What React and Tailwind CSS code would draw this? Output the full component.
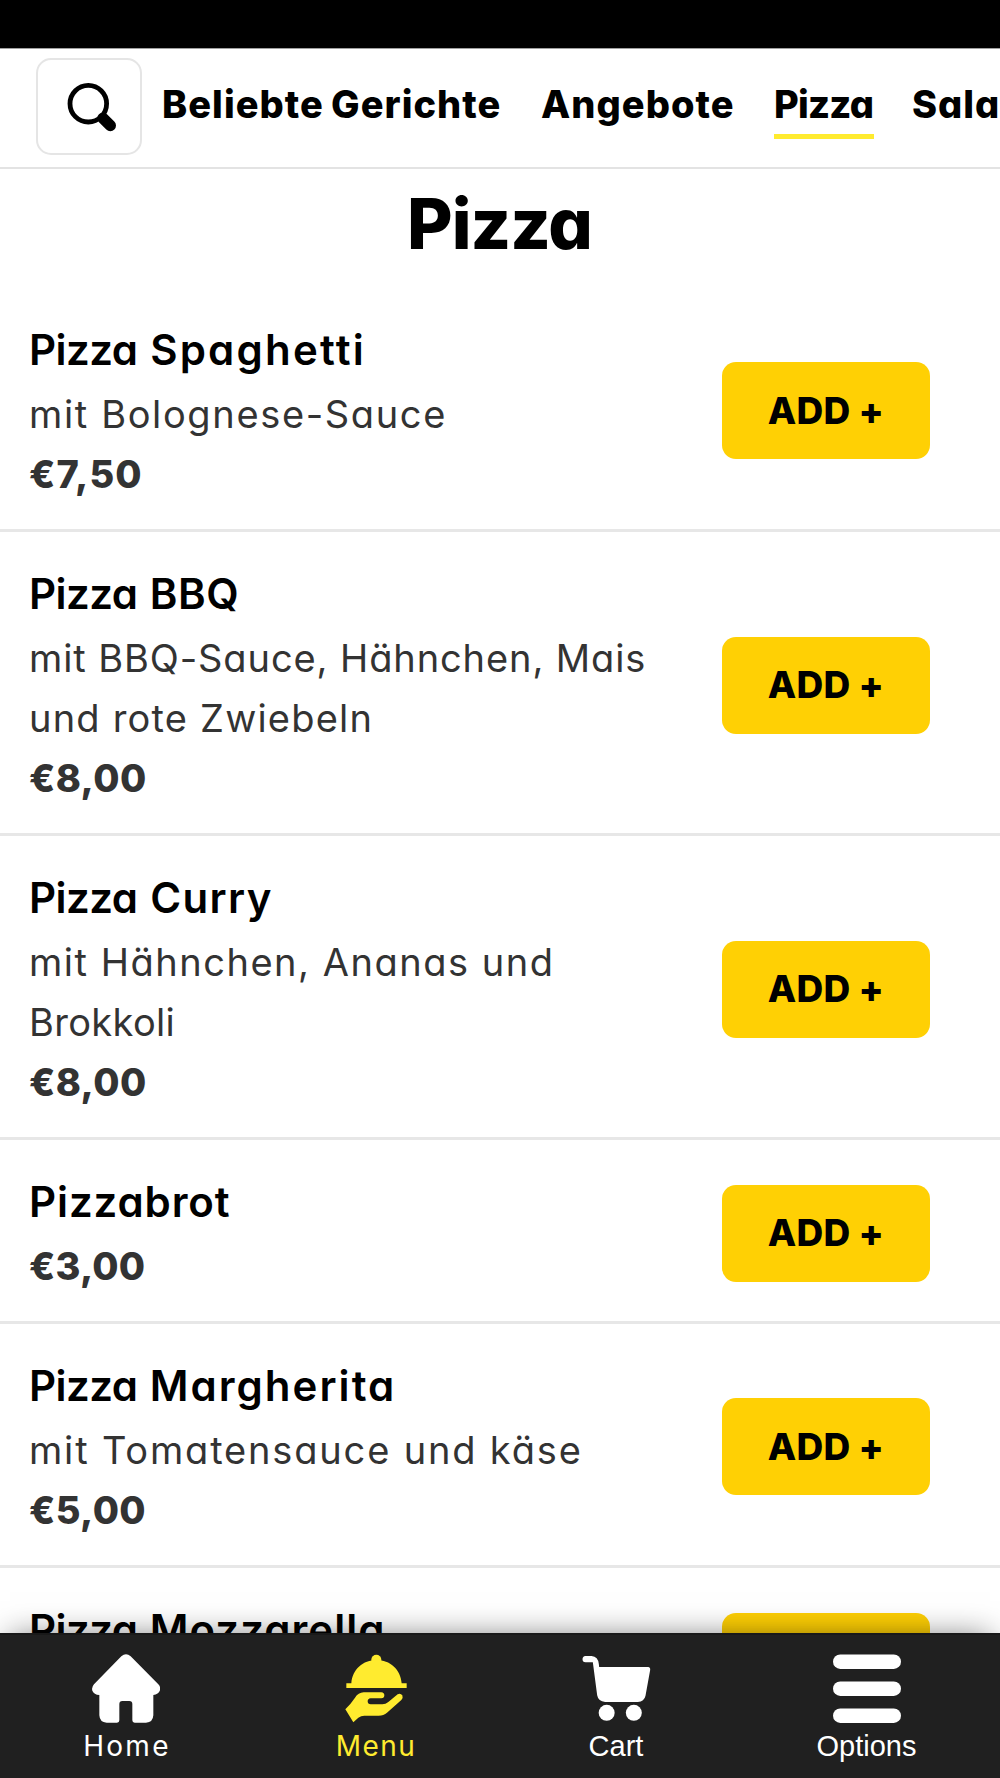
import React from "react";

const categories = [
  { label: "Beliebte Gerichte", cls: "w-[379px] tracking-[1.02px] [word-spacing:-2px]" },
  { label: "Angebote", cls: "w-[233px] tracking-[1.05px]" },
  { label: "Pizza", cls: "w-[100px] mr-[38px] tracking-[-0.8px]", active: true },
  { label: "Salate", cls: "tracking-[1px]" },
];

const dishes = [
  {
    name: "Spaghetti",
    nameCls: "tracking-[2.2px] ml-[2.5px]",
    lines: [["mit Bolognese-Sauce", "tracking-[1.64px]"]],
    price: "€7,50",
    priceCls: "tracking-[1.1px]",
    row: "h-[244px]",
    buttonCls: "mt-[4px]",
  },
  {
    name: "BBQ",
    nameCls: "tracking-[0.6px] ml-[2px]",
    lines: [
      ["mit BBQ-Sauce, Hähnchen, Mais", "tracking-[0.9px]"],
      ["und rote Zwiebeln", "tracking-[1.2px]"],
    ],
    price: "€8,00",
    priceCls: "tracking-[0.4px]",
    row: "h-[304px]",
    buttonCls: "mt-[5px]",
  },
  {
    name: "Curry",
    nameCls: "tracking-[1.4px] ml-[2.5px]",
    lines: [
      ["mit Hähnchen, Ananas und", "tracking-[1.52px]"],
      ["Brokkoli", "tracking-[0.35px]"],
    ],
    price: "€8,00",
    priceCls: "tracking-[0.4px]",
    row: "h-[304px]",
    buttonCls: "mt-[5px]",
  },
  {
    fullName: "Pizzabrot",
    nameCls: "tracking-[0.9px]",
    lines: [],
    price: "€3,00",
    priceCls: "tracking-[0.2px]",
    row: "h-[184px]",
    buttonCls: "mt-[5px]",
  },
  {
    name: "Margherita",
    nameCls: "tracking-[2.05px] ml-[2px]",
    lines: [["mit Tomatensauce und käse", "tracking-[1.83px]"]],
    price: "€5,00",
    priceCls: "tracking-[0.4px]",
    row: "h-[244px]",
    buttonCls: "mt-[4px]",
  },
  {
    name: "Mozzarella",
    nameCls: "tracking-[1.06px] ml-[2px]",
    lines: [],
    price: null,
    row: "h-[184px]",
    buttonCls: "mt-[5px]",
  },
];

function SearchIcon() {
  return (
    <svg className="h-[50px] w-[50px]" viewBox="67 81 50 50" fill="none" stroke="#000">
      <circle cx="88.3" cy="102.7" r="18.3" strokeWidth="4.8" />
      <path d="M103 117.3l7.3 7.2" strokeWidth="11.4" strokeLinecap="round" />
      <path d="M100 114l4 4" strokeWidth="8" />
    </svg>
  );
}

function HomeIcon() {
  return (
    <svg className="h-[69px] w-[68px]" viewBox="275 192 204 207" fill="currentColor">
      <path d="M363 199Q377 187 391 199L474 283Q482 292 479 301Q474 314 459 315V376Q458 397 437 398H403Q396 398 396 391V342Q396 333 387 333H366Q357 333 357 342V391Q357 398 350 398H319Q298 397 297 376V315Q281 314 276 302Q273 292 281 283Z" />
    </svg>
  );
}

function MenuIcon() {
  return (
    <svg className="h-[69px] w-[62px]" viewBox="1038 192 186 207" fill="currentColor">
      <path d="M1117 226V209A15 15 0 0 1 1147 209V226Z" />
      <path d="M1057 280C1060 238 1092 210 1132.500 210S1205 238 1208 280H1223V294H1042V280Z" />
      <path d="M1039 358Q1056 341 1068 323Q1078 308 1094 307H1147Q1156 308 1156 316Q1156 325 1147 325H1115Q1106 326 1106 334Q1106 343 1115 343H1150Q1160 343 1168 336L1196 313Q1204 308 1210 316Q1213 323 1207 330L1164 368Q1154 377 1139 377H1096Q1086 377 1078 383L1063 397Z" />
    </svg>
  );
}

function CartIcon() {
  return (
    <svg className="h-[69px] w-[69px]" viewBox="245 192 206 207" fill="currentColor">
      <path d="M255 198H273Q293 200 295 222L296 231H443Q450 232 449 240L435 317Q431 335 412 336H314Q293 334 290 316L277 217H255Q246 216 246 207.500Q246 199 255 198Z" />
      <circle cx="318.500" cy="368.500" r="24" />
      <circle cx="400" cy="368.500" r="24" />
    </svg>
  );
}

function OptionsIcon() {
  return (
    <svg className="h-[69px] w-[68px]" viewBox="0 0 68 69" fill="currentColor">
      <rect y="0.4" width="68" height="14.5" rx="7.25" />
      <rect y="27.4" width="68" height="14.5" rx="7.25" />
      <rect y="54.4" width="68" height="14.5" rx="7.25" />
    </svg>
  );
}

function Tab({ icon, label, cls, textCls }) {
  return (
    <a className={`flex shrink-0 flex-col items-center pt-[19px] ${cls}`}>
      {icon}
      <span className={`mt-[5px] leading-[36px] ${textCls}`}>{label}</span>
    </a>
  );
}

function Dish({ dish }) {
  return (
    <li
      className={`flex shrink-0 items-center justify-between border-b-[3px] border-[#e7e7e7] pr-[70px] pl-[29px] ${dish.row}`}
    >
      <div className="self-start pt-[32px] whitespace-nowrap">
        <h2 className="mb-[4px] text-[42px] leading-[60px] font-semibold text-black">
          {dish.fullName ? (
            <span className={dish.nameCls}>{dish.fullName}</span>
          ) : (
            <>
              <span className="tracking-[-0.5px]">Pizza </span>
              <span className={dish.nameCls}>{dish.name}</span>
            </>
          )}
        </h2>
        {dish.lines.map(([text, cls]) => (
          <p key={text} className={`text-[38px] leading-[60px] text-[#333] ${cls}`}>
            {text}
          </p>
        ))}
        {dish.price && (
          <p className={`text-[38px] leading-[60px] font-extrabold text-[#333] ${dish.priceCls}`}>
            {dish.price}
          </p>
        )}
      </div>
      <button
        className={`h-[97px] w-[208px] rounded-[14px] bg-[#ffd004] text-[37px] font-extrabold tracking-[0.2px] text-black ${dish.buttonCls}`}
      >
        ADD +
      </button>
    </li>
  );
}

export default function App() {
  return (
    <div className="flex h-[1778px] w-[1000px] flex-col overflow-hidden bg-white font-['Inter',sans-serif] text-black [font-feature-settings:'cv11']">
      <div className="h-[49px] shrink-0 border-b border-[#a0a0a0] bg-black" />

      <header className="flex h-[120px] shrink-0 overflow-hidden border-b-2 border-[#e3e3e3] bg-white">
        <button className="mt-[9px] ml-[36px] flex h-[97px] w-[106px] shrink-0 items-center justify-center rounded-[15px] border-2 border-[#e5e5e5] pl-[5px]">
          <SearchIcon />
        </button>
        <nav className="mt-[25px] ml-[20px] flex items-start text-[38px] leading-[60px] font-extrabold whitespace-nowrap">
          {categories.map((c) => (
            <a
              key={c.label}
              className={`shrink-0 ${c.cls} ${c.active ? "border-b-[5px] border-[#ffeb2f]" : ""}`}
            >
              {c.label}
            </a>
          ))}
        </nav>
      </header>

      <main className="flex min-h-0 flex-1 flex-col overflow-hidden">
        <h1 className="h-[119px] shrink-0 pt-[17px] pr-[1px] text-center text-[70px] leading-[76px] font-extrabold tracking-[-1px]">
          Pizza
        </h1>
        <ul className="flex flex-col">
          {dishes.map((d) => (
            <Dish key={d.fullName || d.name} dish={d} />
          ))}
        </ul>
      </main>

      <footer className="relative flex h-[145px] shrink-0 border-t-2 border-[#191919] bg-[#202020] text-white shadow-[0_-6px_30px_-10px_rgba(0,0,0,0.55)]">
        <Tab
          icon={<HomeIcon />}
          label="Home"
          cls="w-[252px]"
          textCls="text-[28px] tracking-[2.3px] pl-[2px]"
        />
        <Tab
          icon={<MenuIcon />}
          label="Menu"
          cls="w-[248px] text-[#ffeb2f]"
          textCls="text-[28px] tracking-[1.5px]"
        />
        <Tab
          icon={<CartIcon />}
          label="Cart"
          cls="w-[232px]"
          textCls="text-[29px] font-['Liberation_Sans',sans-serif]"
        />
        <Tab
          icon={<OptionsIcon />}
          label="Options"
          cls="w-[269px]"
          textCls="text-[29px] font-['Liberation_Sans',sans-serif]"
        />
      </footer>
    </div>
  );
}
